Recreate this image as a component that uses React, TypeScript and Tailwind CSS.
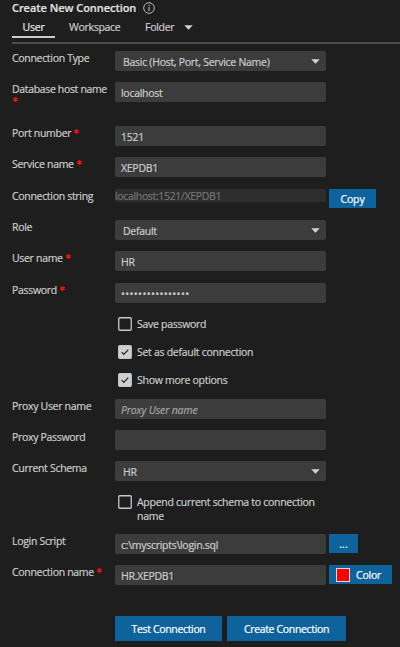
import React from "react";

function Star({ className = "" }: { className?: string }) {
  return (
    <svg className={`inline-block h-[5px] w-[5px] shrink-0 ${className}`} viewBox="0 0 10 10">
      <path d="M5 0v10M0.5 2.5l9 5M9.5 2.5l-9 5" stroke="#ee1111" strokeWidth="2.8" />
    </svg>
  );
}

function Caret() {
  return (
    <svg className="h-[5px] w-[9px] shrink-0" viewBox="0 0 9 5">
      <path d="M0.3 0.3h8.4L4.5 4.8z" fill="#d4d4d4" />
    </svg>
  );
}

type RowProps = {
  label?: string;
  required?: boolean;
  height: string;
  children: React.ReactNode;
};

function Row({ label, required, height, children }: RowProps) {
  return (
    <div className={`flex shrink-0 items-start pl-3 ${height}`}>
      <div className="flex w-[103px] shrink-0 items-start leading-[15px] tracking-[-0.31px] whitespace-nowrap">
        <span>{label}</span>
        {required && <Star className="mt-[3px] ml-[3px]" />}
      </div>
      {children}
    </div>
  );
}

function Field({ value = "", textClass = "" }: { value?: string; textClass?: string }) {
  return (
    <div className="flex h-[20px] w-[211px] shrink-0 items-center rounded-[2px] bg-[#3c3c3c] pl-[6px] pt-px whitespace-pre">
      <span className={textClass}>{value}</span>
    </div>
  );
}

function Select({ value }: { value: string }) {
  return (
    <div className="flex h-[20px] w-[211px] shrink-0 items-center justify-between rounded-[2px] bg-[#3c3c3c] pr-[6px] pl-[8px] whitespace-nowrap">
      <span className="pt-px">{value}</span>
      <Caret />
    </div>
  );
}

function Check({ checked, children, height }: { checked?: boolean; children: React.ReactNode; height: string }) {
  return (
    <div className={`flex shrink-0 items-start pl-[118px] ${height}`}>
      <svg className="h-[14px] w-[14px] shrink-0" viewBox="0 0 14 14">
        <rect x="0.75" y="0.75" width="12.5" height="12.5" rx="1" fill={checked ? "#d0d0d0" : "#1e1e1e"} stroke="#c8c8c8" strokeWidth="1.3" />
        {checked && <path d="M3.7 7.2l2.1 2.1 4.5-4.6" fill="none" stroke="#1e1e1e" strokeWidth="1.2" />}
      </svg>
      <div className="ml-[5px] pt-px leading-[13.5px] whitespace-nowrap">{children}</div>
    </div>
  );
}

export default function App() {
  return (
    <div className="flex h-[647px] w-[400px] flex-col overflow-hidden bg-[#1e1e1e] font-['Open_Sans','Noto_Sans',sans-serif] text-[10.5px] leading-[14px] tracking-[-0.28px] text-[#cccccc] [-webkit-text-stroke:0.2px]">
      <div className="flex h-[16px] shrink-0 items-center pl-3">
        <h1 className="text-[11px] leading-[16px] font-semibold tracking-[-0.05px] whitespace-nowrap text-[#e0e0e0]">Create New Connection</h1>
        <svg className="ml-[7px] h-3 w-3" viewBox="0 0 12 12" fill="none" stroke="#c8c8c8">
          <circle cx="6" cy="6" r="5.3" strokeWidth="0.9" />
          <path d="M6 5v4M6 2.8v1.2" strokeWidth="1.1" />
        </svg>
      </div>
      <div className="ml-3 flex h-[25px] shrink-0 items-start">
        <div className="flex h-[22px] w-[43px] justify-center border-b-2 border-[#cccccc] pt-[4px] tracking-[-0.2px] text-[#e7e7e7]">User</div>
        <div className="ml-[14px] w-[76px] pt-[4px]">Workspace</div>
        <div className="flex items-center gap-[10px] pt-[4px]">
          <span>Folder</span>
          <Caret />
        </div>
      </div>
      <div className="ml-3 h-[10px] shrink-0">
        <div className="mt-px h-[2px] bg-[#4b4b4b]" />
      </div>

      <Row label="Connection Type" height="h-[31px]">
        <Select value="Basic (Host, Port, Service Name)" />
      </Row>
      <div className="flex h-[44px] shrink-0 items-start pl-3">
        <div className="flex w-[103px] shrink-0 flex-col items-start leading-[15px] tracking-[-0.34px] whitespace-nowrap">
          <span>Database host name</span>
          <Star className="ml-px" />
        </div>
        <Field value="localhost" />
      </div>
      <Row label="Port number" required height="h-[31px]">
        <Field value="1521" />
      </Row>
      <Row label="Service name" required height="h-[32px]">
        <Field value="XEPDB1" />
      </Row>
      <Row label="Connection string" height="h-[31px]">
        <div className="flex h-[13px] w-[211px] shrink-0 items-center rounded-[2px] bg-[#2d2d2d] pt-px leading-[13px] tracking-[-0.34px] text-[#757575]">localhost:1521/XEPDB1</div>
        <button className="ml-[3px] h-[19px] w-[47px] bg-[#0e639c] pt-px tracking-[-0.1px] text-white">Copy</button>
      </Row>
      <Row label="Role" height="h-[31px]">
        <Select value="Default" />
      </Row>
      <Row label="User name" required height="h-[32px]">
        <Field value="HR" />
      </Row>
      <Row label="Password" required height="h-[34px]">
        <Field value="••••••••••••••••" textClass="tracking-[0.33px]" />
      </Row>
      <Check height="h-[28px]">Save password</Check>
      <Check checked height="h-[28px]">Set as default connection</Check>
      <Check checked height="h-[26px]">Show more options</Check>
      <Row label="Proxy User name" height="h-[31px]">
        <Field value="Proxy User name" textClass="italic tracking-[-0.15px] text-[#a6a6a6]" />
      </Row>
      <Row label="Proxy Password" height="h-[31px]">
        <Field />
      </Row>
      <Row label="Current Schema" height="h-[34px]">
        <Select value="HR" />
      </Row>
      <Check height="h-[39px]">
        Append current schema to connection
        <br />
        name
      </Check>
      <Row label="Login Script" height="h-[31px]">
        <Field value="c:\myscripts\login.sql" />
        <button className="ml-[3px] h-[19px] w-[29px] bg-[#0e639c] tracking-normal text-white">...</button>
      </Row>
      <Row label="Connection name" required height="h-[51px]">
        <Field value="HR.XEPDB1" />
        <button className="ml-[3px] flex h-[19px] w-[63px] items-center bg-[#0e639c] pl-[7px] tracking-[-0.2px] text-white">
          <span className="mr-[6px] h-[14px] w-[14px] border border-[#dddddd] bg-[#ff0000]" />
          Color
        </button>
      </Row>
      <div className="flex gap-[5px] pl-[115px]">
        <button className="h-[25px] w-[107px] bg-[#0e639c] tracking-[-0.34px] whitespace-nowrap text-white">Test Connection</button>
        <button className="h-[25px] w-[119px] bg-[#0e639c] tracking-[-0.34px] whitespace-nowrap text-white">Create Connection</button>
      </div>
    </div>
  );
}
